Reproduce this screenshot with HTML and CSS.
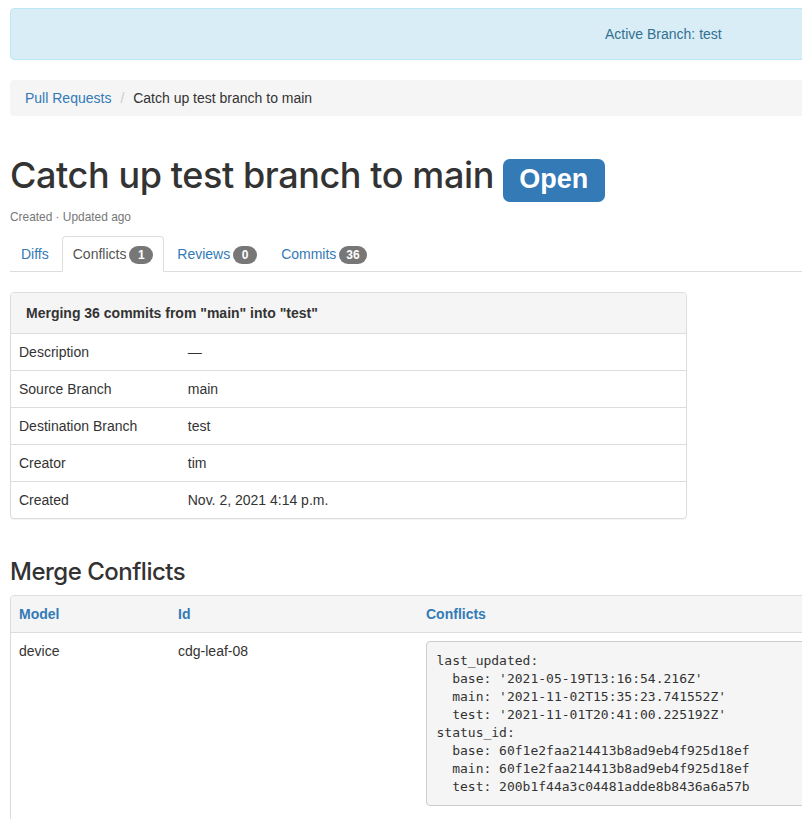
FILE: index.html
```html
<!DOCTYPE html>
<html>
<head>
<meta charset="utf-8">
<link rel="stylesheet" href="styles.css">
</head>
<body>
<div class="page">
  <div class="alert">Active Branch: test</div>

  <ol class="breadcrumb">
    <li><a href="#">Pull Requests</a></li>
    <li class="active">Catch up test branch to main</li>
  </ol>

  <div class="header">
    <h1 class="title">Catch up test branch to main <span class="label">Open</span></h1>
    <p class="meta"><small>Created · Updated ago</small></p>
  </div>

  <ul class="tabs">
    <li><a href="#">Diffs</a></li>
    <li class="active"><a href="#">Conflicts <span class="badge">1</span></a></li>
    <li><a href="#">Reviews <span class="badge">0</span></a></li>
    <li><a href="#">Commits <span class="badge">36</span></a></li>
  </ul>

  <div class="tab-content">
    <div class="block">
      <div class="panel summary">
        <div class="panel-heading"><strong>Merging 36 commits from "main" into "test"</strong></div>
        <table class="table">
          <tbody>
            <tr><td class="key">Description</td><td>—</td></tr>
            <tr><td class="key">Source Branch</td><td>main</td></tr>
            <tr><td class="key">Destination Branch</td><td>test</td></tr>
            <tr><td class="key">Creator</td><td>tim</td></tr>
            <tr><td class="key">Created</td><td>Nov. 2, 2021 4:14 p.m.</td></tr>
          </tbody>
        </table>
      </div>
    </div>

    <div class="block">
      <h3 class="section">Merge Conflicts</h3>
      <div class="panel conflicts">
        <table class="table">
          <thead>
            <tr>
              <th class="c-model"><a href="#">Model</a></th>
              <th class="c-id"><a href="#">Id</a></th>
              <th><a href="#">Conflicts</a></th>
            </tr>
          </thead>
          <tbody>
            <tr>
              <td>device</td>
              <td>cdg-leaf-08</td>
              <td><pre>last_updated:
  base: '2021-05-19T13:16:54.216Z'
  main: '2021-11-02T15:35:23.741552Z'
  test: '2021-11-01T20:41:00.225192Z'
status_id:
  base: 60f1e2faa214413b8ad9eb4f925d18ef
  main: 60f1e2faa214413b8ad9eb4f925d18ef
  test: 200b1f44a3c04481adde8b8436a6a57b</pre></td>
            </tr>
          </tbody>
        </table>
      </div>
    </div>
  </div>
</div>
</body>
</html>
```

FILE: styles.css
```css
html {
  overflow: hidden;
}
body {
  margin: 0;
  font-family: "Liberation Sans", Arial, sans-serif;
  font-size: 14px;
  line-height: 1.42857143;
  color: #333;
  background: #fff;
}
a {
  color: #337ab7;
  text-decoration: none;
}
.page {
  width: 920px;
  margin-left: 10px;
  padding-top: 8px;
}
.alert {
  padding: 15px 15px 15px 594px;
  margin-bottom: 20px;
  border: 1px solid #bce8f1;
  border-radius: 4px;
  background: #d9edf7;
  color: #31708f;
}
.breadcrumb {
  list-style: none;
  margin: 0 0 20px;
  padding: 8px 15px;
  background: #f5f5f5;
  border-radius: 4px;
  display: flex;
}
.breadcrumb li + li {
  margin-left: 4px;
}
.breadcrumb li + li::before {
  content: "/\00a0";
  color: #ccc;
  padding: 0 5px;
}
.breadcrumb .active {
  color: #333;
}
.header,
.block {
  display: flow-root;
}
.title {
  margin: 20px 0 10px;
  font-family: Inter, "Liberation Sans", sans-serif;
  font-size: 36px;
  font-weight: 500;
  letter-spacing: -0.4px;
  line-height: 1.1;
  color: #333;
}
.label {
  display: inline;
  padding: .2em .6em .3em;
  font-family: "Liberation Sans", Arial, sans-serif;
  font-size: 75%;
  font-weight: bold;
  letter-spacing: 0;
  line-height: 1;
  color: #fff;
  background: #337ab7;
  border-radius: .25em;
  vertical-align: baseline;
  white-space: nowrap;
}
.meta {
  margin: 0 0 10px;
}
.meta small {
  font-size: 85%;
  color: #777;
}
.tabs {
  list-style: none;
  margin: 0;
  padding: 0;
  display: flex;
  border-bottom: 1px solid #ddd;
}
.tabs li {
  margin-bottom: -1px;
}
.tabs a {
  display: block;
  margin-right: 2px;
  padding: 7px 10px;
  line-height: 20px;
  word-spacing: -1px;
  border: 1px solid transparent;
  border-radius: 4px 4px 0 0;
}
.tabs .active a {
  color: #555;
  background: #fff;
  border-color: #ddd;
  border-bottom-color: transparent;
}
.badge {
  display: inline-block;
  min-width: 10px;
  padding: 3px 7px;
  font-size: 12px;
  font-weight: bold;
  line-height: 1;
  color: #fff;
  text-align: center;
  white-space: nowrap;
  vertical-align: middle;
  background: #777;
  border-radius: 10px;
}
.tab-content {
  padding-top: 20px;
}
.panel {
  margin-bottom: 20px;
  background: #fff;
  border: 1px solid #ddd;
  border-radius: 4px;
  box-shadow: 0 1px 1px rgba(0, 0, 0, .05);
  overflow: hidden;
}
.summary {
  width: 675px;
}
.panel-heading {
  padding: 10px 15px;
  background: #f5f5f5;
  border-bottom: 1px solid #ddd;
  color: #333;
}
.table {
  width: 100%;
  border-collapse: collapse;
  border-spacing: 0;
}
.table td,
.table th {
  padding: 8px;
  line-height: 20px;
  text-align: left;
  vertical-align: top;
  border-top: 1px solid #ddd;
}
.table tbody tr:first-child td {
  border-top: 0;
}
.key {
  width: 25%;
}
.table thead th {
  border-top: 0;
  border-bottom: 1px solid #ddd;
  background: #f5f5f5;
  font-weight: bold;
}
.c-model {
  width: 143px;
}
.c-id {
  width: 232px;
}
.section {
  margin: 20px 0 10px;
  font-family: Inter, "Liberation Sans", sans-serif;
  font-size: 24px;
  font-weight: 500;
  letter-spacing: -0.5px;
  line-height: 1.1;
  color: #333;
}
pre {
  margin: 0 0 10px;
  padding: 9.5px;
  font-family: "DejaVu Sans Mono", Menlo, monospace;
  font-size: 13px;
  line-height: 18px;
  color: #333;
  background: #f5f5f5;
  border: 1px solid #ccc;
  border-radius: 4px;
}
```
